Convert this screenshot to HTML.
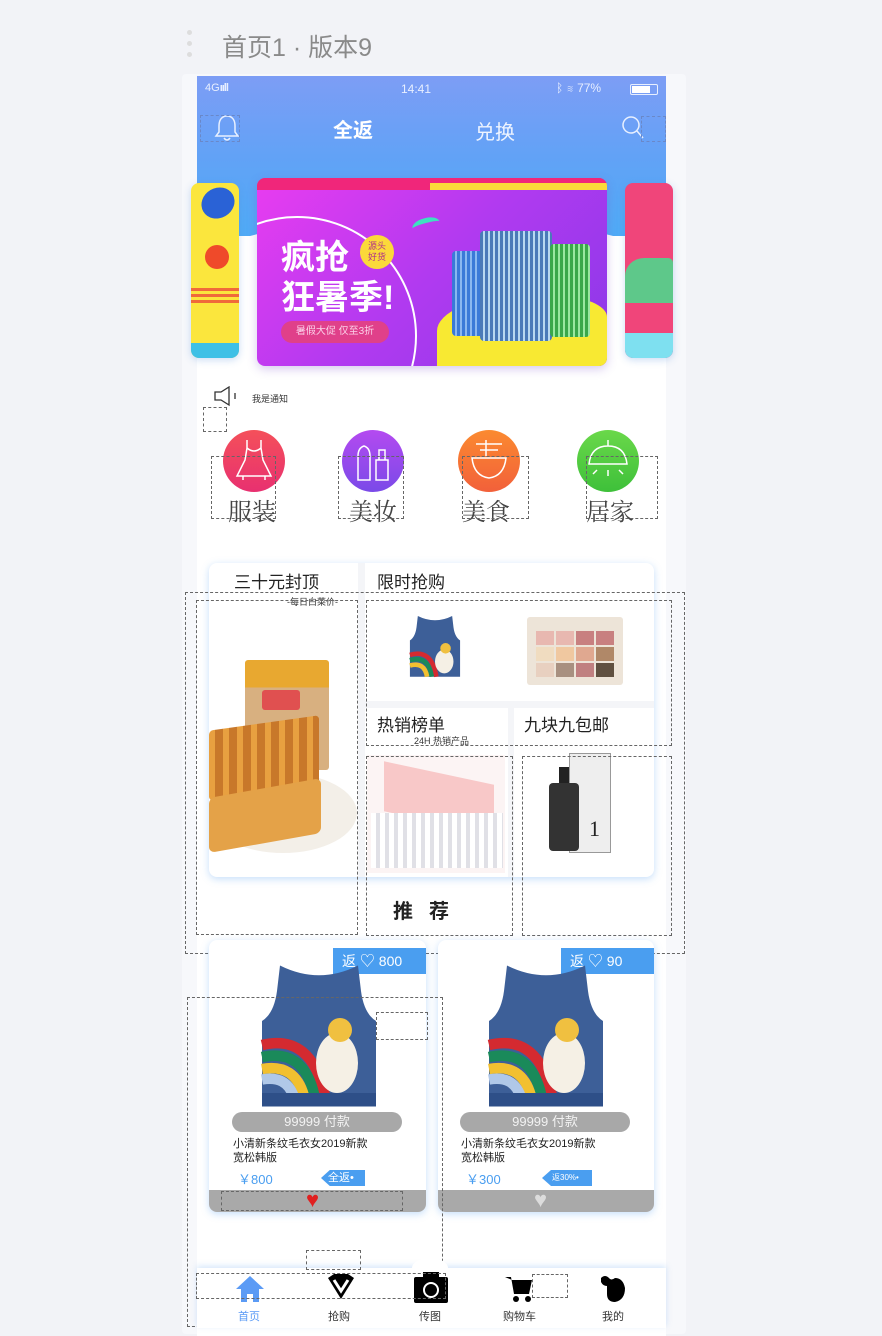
<!DOCTYPE html>
<html><head><meta charset="utf-8">
<style>
*{margin:0;padding:0;box-sizing:border-box}
body{width:882px;height:1322px;background:#f2f3f7;position:relative;overflow:hidden;font-family:"Liberation Sans","Noto Sans CJK SC",sans-serif}
.a{position:absolute}
.dash{position:absolute;border:1.2px dashed #666}
.t{white-space:nowrap}
</style></head><body>

<div class="a" style="left:187px;top:30px;width:5px;height:5px;border-radius:50%;background:#ddd"></div>
<div class="a" style="left:187px;top:41px;width:5px;height:5px;border-radius:50%;background:#ddd"></div>
<div class="a" style="left:187px;top:52px;width:5px;height:5px;border-radius:50%;background:#ddd"></div>
<div class="a t" style="left:222px;top:28px;font-size:25px;color:#8a8a8a">首页1 · 版本9</div>

<div class="a" style="left:182px;top:74px;width:504px;height:1260px;background:#f7f8fb;border-radius:4px"></div>
<div class="a" style="left:197px;top:76px;width:469px;height:1260px;background:#fff;overflow:hidden">
 <div class="a" style="left:0;top:0;width:469px;height:160px;background:linear-gradient(180deg,#7d9df5 0%,#62a2f6 50%,#4fabf6 100%)"></div>
 <div class="a" style="left:-40px;top:140px;width:549px;height:80px;background:#fff;border-radius:50%/100% 100% 0 0"></div>
</div>

<div class="a t" style="left:205px;top:82px;font-size:11px;color:#e8efff">4G<b style="letter-spacing:-1px">ııll</b></div>
<div class="a t" style="left:401px;top:82px;font-size:12px;color:#e8efff">14:41</div>
<div class="a t" style="left:556px;top:81px;font-size:12px;color:#e8efff">ᛒ ≋ 77%</div>
<div class="a" style="left:630px;top:84px;width:28px;height:11px;border:1px solid #e8efff;border-radius:2px"><div style="width:18px;height:7px;margin:1px;background:#fff"></div></div>

<svg class="a" style="left:212px;top:112px" width="30" height="32" viewBox="0 0 30 32"><path d="M15 4 C9 4 7 9 7 14 L7 20 L4 24 L26 24 L23 20 L23 14 C23 9 21 4 15 4Z M12 26 Q15 30 18 26" fill="none" stroke="#e8f0ff" stroke-width="1.5"/></svg>
<div class="dash" style="left:200px;top:115px;width:40px;height:27px;border-color:#6a88c8"></div>
<div class="a t" style="left:333px;top:114px;font-size:20px;font-weight:bold;color:#fff">全返</div>
<div class="a t" style="left:475px;top:116px;font-size:20px;color:#eef4ff">兑换</div>
<svg class="a" style="left:620px;top:114px" width="26" height="28"><circle cx="11" cy="11" r="8" fill="none" stroke="#e8f0ff" stroke-width="1.5"/><path d="M17 17 L23 24" stroke="#e8f0ff" stroke-width="1.5"/></svg>
<div class="dash" style="left:641px;top:116px;width:25px;height:26px;border-color:#6a88c8"></div>

<div class="a" style="left:191px;top:183px;width:48px;height:175px;border-radius:8px;background:#fbe63d;overflow:hidden;box-shadow:0 2px 8px rgba(80,140,220,.3)">
 <div class="a" style="left:10px;top:5px;width:34px;height:30px;border-radius:50%;background:#2a62d6;transform:rotate(-30deg)"></div>
 <div class="a" style="left:14px;top:62px;width:24px;height:24px;border-radius:50%;background:#ef4a2a"></div>
 <div class="a" style="left:0;top:105px;width:48px;height:3px;background:#f06a3a;box-shadow:0 6px 0 #f06a3a,0 12px 0 #f06a3a"></div>
 <div class="a" style="left:0;top:160px;width:48px;height:15px;background:#3ec0e6"></div>
</div>
<div class="a" style="left:625px;top:183px;width:48px;height:175px;border-radius:8px;background:#f0457a;overflow:hidden;box-shadow:0 2px 8px rgba(80,140,220,.3)">
 <div class="a" style="left:0;top:75px;width:48px;height:45px;background:#5ec88a;border-radius:40% 10% 0 0"></div>
 <div class="a" style="left:0;top:150px;width:48px;height:25px;background:#7ee0f0"></div>
</div>
<div class="a" style="left:257px;top:178px;width:350px;height:188px;border-radius:8px;overflow:hidden;background:linear-gradient(135deg,#e93cf0 0%,#b13af0 50%,#8a38e8 100%);box-shadow:0 3px 10px rgba(120,80,200,.3)">
 <div class="a" style="left:0;top:0;width:350px;height:12px;background:#f0267a"></div>
 <div class="a" style="left:173px;top:5px;width:177px;height:7px;background:#fbd93a"></div>
 <div class="a" style="left:-80px;top:38px;width:240px;height:240px;border:2px solid #fff;border-radius:50%"></div>
 <div class="a t" style="left:24px;top:60px;font-size:34px;font-weight:bold;color:#fff;line-height:40px">疯抢<br>狂暑季!</div>
 <div class="a" style="left:103px;top:57px;width:34px;height:34px;border-radius:50%;background:#fbd93a;font-size:9px;line-height:11px;text-align:center;padding-top:6px;color:#b0308a">源头<br>好货</div>
 <div class="a t" style="left:24px;top:143px;width:108px;height:22px;border-radius:11px;background:#e0408a;font-size:10px;color:#fbd0e8;text-align:center;line-height:22px">暑假大促 仅至3折</div>
 <div class="a" style="left:180px;top:118px;width:170px;height:70px;background:#f8e932;border-radius:50% 30% 0 0"></div>
 <div class="a" style="left:195px;top:73px;width:38px;height:85px;border-radius:4px;background:repeating-linear-gradient(90deg,#3a7ad8 0 3px,#8ab8f0 3px 5px)"></div>
 <div class="a" style="left:223px;top:53px;width:72px;height:110px;border-radius:4px;background:repeating-linear-gradient(90deg,#4a7ab8 0 3px,#b8d8f0 3px 5px)"></div>
 <div class="a" style="left:293px;top:66px;width:40px;height:93px;border-radius:4px;background:repeating-linear-gradient(90deg,#3aa84a 0 3px,#9ae8a0 3px 5px)"></div>
 <div class="a" style="left:155px;top:40px;width:28px;height:14px;border-radius:50%;border-top:5px solid #3ee0c0;transform:rotate(-15deg)"></div>
</div>

<svg class="a" style="left:213px;top:386px" width="28" height="22"><path d="M2 6 H8 L16 1 V19 L8 14 H2 Z" fill="none" stroke="#333" stroke-width="1.3"/><path d="M22 7 V13" stroke="#333" stroke-width="1.3"/></svg>
<div class="a t" style="left:252px;top:392px;font-size:9px;color:#333">我是通知</div>
<div class="dash" style="left:203px;top:407px;width:24px;height:25px"></div>

<div class="a" style="left:223px;top:430px;width:62px;height:62px;border-radius:50%;background:linear-gradient(180deg,#f4505a,#e83070)"></div>
<div class="a" style="left:342px;top:430px;width:62px;height:62px;border-radius:50%;background:linear-gradient(180deg,#b44af0,#7a4ae8)"></div>
<div class="a" style="left:458px;top:430px;width:62px;height:62px;border-radius:50%;background:linear-gradient(180deg,#fb8a30,#f2603a)"></div>
<div class="a" style="left:577px;top:430px;width:62px;height:62px;border-radius:50%;background:linear-gradient(180deg,#6ad84a,#3ec03a)"></div>
<svg class="a" style="left:223px;top:430px" width="62" height="62"><path d="M24 10 V18 M38 10 V18 M24 18 Q31 24 38 18 L40 30 L48 46 H14 L22 30 Z M20 46 V50 M42 46 V50" fill="none" stroke="#fff" stroke-width="1.5"/></svg>
<svg class="a" style="left:342px;top:430px" width="62" height="62"><path d="M16 50 V26 Q16 18 22 16 Q28 18 28 26 V50 Z M34 50 V30 H46 V50 Z M37 30 V20 H43 V30" fill="none" stroke="#fff" stroke-width="1.5"/></svg>
<svg class="a" style="left:458px;top:430px" width="62" height="62"><path d="M18 14 H44 M22 20 H40 M28 10 V26 M14 28 H48 Q46 46 31 48 Q16 46 14 28 Z" fill="none" stroke="#fff" stroke-width="1.5"/></svg>
<svg class="a" style="left:577px;top:430px" width="62" height="62"><path d="M31 10 V16 M12 34 Q14 16 31 16 Q48 16 50 34 Z M31 40 V46 M20 40 L16 44 M42 40 L46 44" fill="none" stroke="#fff" stroke-width="1.5"/></svg>
<div class="a t" style="left:228px;top:492px;font-size:24px;color:#444;font-family:'Noto Serif CJK SC',serif">服装</div>
<div class="a t" style="left:349px;top:492px;font-size:24px;color:#444;font-family:'Noto Serif CJK SC',serif">美妆</div>
<div class="a t" style="left:462px;top:492px;font-size:24px;color:#444;font-family:'Noto Serif CJK SC',serif">美食</div>
<div class="a t" style="left:586px;top:492px;font-size:24px;color:#444;font-family:'Noto Serif CJK SC',serif">居家</div>
<div class="dash" style="left:211px;top:456px;width:65px;height:63px"></div>
<div class="dash" style="left:338px;top:456px;width:66px;height:63px"></div>
<div class="dash" style="left:462px;top:456px;width:67px;height:63px"></div>
<div class="dash" style="left:586px;top:456px;width:72px;height:63px"></div>

<div class="a" style="left:209px;top:563px;width:445px;height:314px;border-radius:8px;background:#fff;box-shadow:0 2px 8px rgba(90,160,240,.35);overflow:hidden">
 <div class="a" style="left:149px;top:0;width:7px;height:314px;background:#f4f5f8"></div>
 <div class="a" style="left:156px;top:138px;width:289px;height:7px;background:#f4f5f8"></div>
 <div class="a" style="left:299px;top:145px;width:6px;height:169px;background:#f4f5f8"></div>
 <div class="a t" style="left:25px;top:5px;font-size:17px;color:#222">三十元封顶</div>
 <div class="a t" style="left:78px;top:32px;font-size:9px;color:#333">-每日白菜价-</div>
 <div class="a t" style="left:168px;top:5px;font-size:17px;color:#222">限时抢购</div>
 <div class="a t" style="left:168px;top:148px;font-size:17px;color:#222">热销榜单</div>
 <div class="a t" style="left:205px;top:171px;font-size:9px;color:#333">24H 热销产品</div>
 <div class="a t" style="left:315px;top:148px;font-size:17px;color:#222">九块九包邮</div>
 <div class="a" style="left:36px;top:97px;width:84px;height:110px;background:linear-gradient(180deg,#e8a830 0 25%,#d8b080 25%);border-radius:3px"></div>
 <div class="a" style="left:53px;top:127px;width:38px;height:20px;background:#e05050;border-radius:3px"></div>
 <div class="a" style="left:0;top:210px;width:148px;height:80px;background:#f3efe8;border-radius:50%"></div>
 <div class="a" style="left:0;top:160px;width:110px;height:70px;transform:skewY(-8deg);border-radius:4px;background:repeating-linear-gradient(90deg,#e8a040 0 6px,#c8782a 6px 14px)"></div>
 <div class="a" style="left:0;top:225px;width:112px;height:55px;background:#e4a248;transform:skewY(-10deg);border-radius:6px"></div>
 <svg class="a" style="left:193px;top:44px" width="66" height="80" viewBox="0 0 100 100"><path d="M24 3 Q50 16 76 3 L78 20 Q80 35 88 40 L88 95 L12 95 L12 40 Q20 35 22 20 Z" fill="#3d5f98"/><g fill="none" stroke-width="7"><path d="M12 62 Q45 52 52 95" stroke="#d42a30"/><path d="M12 70 Q40 62 45 95" stroke="#1a8a5a"/><path d="M12 78 Q34 72 38 95" stroke="#f2c030"/></g><ellipse cx="64" cy="72" rx="14" ry="18" fill="#f5f0e5"/><circle cx="66" cy="52" r="8" fill="#f0c040"/></svg>
 <div class="a" style="left:318px;top:54px;width:96px;height:68px;background:#ede4d8;border-radius:3px"></div>
 <div class="a" style="left:327px;top:68px;width:78px;height:46px;display:grid;grid-template-columns:repeat(4,1fr);gap:2px">
  <i style="background:#e8b8b0"></i><i style="background:#e8b8b0"></i><i style="background:#c88080"></i><i style="background:#c88080"></i>
  <i style="background:#f0dcc0"></i><i style="background:#f0c8a0"></i><i style="background:#e0a890"></i><i style="background:#b08868"></i>
  <i style="background:#e8d0c0"></i><i style="background:#a89080"></i><i style="background:#c08080"></i><i style="background:#605040"></i>
 </div>
 <div class="a" style="left:158px;top:192px;width:138px;height:118px;background:#fcf4f4"></div>
 <div class="a" style="left:175px;top:210px;width:110px;height:50px;background:#f8c8c8;transform:skewY(12deg)"></div>
 <div class="a" style="left:162px;top:250px;width:132px;height:55px;background:repeating-linear-gradient(90deg,#fff 0 5px,#e0e0e6 5px 9px)"></div>
 <div class="a" style="left:360px;top:190px;width:42px;height:100px;background:#eee;border:1px solid #999"></div>
 <div class="a" style="left:340px;top:220px;width:30px;height:68px;background:#333;border-radius:4px"></div>
 <div class="a" style="left:350px;top:204px;width:10px;height:16px;background:#222"></div>
 <div class="a t" style="left:380px;top:253px;font-size:22px;font-family:'Liberation Serif',serif;color:#222">1</div>
</div>
<div class="dash" style="left:185px;top:592px;width:500px;height:362px"></div>
<div class="dash" style="left:196px;top:600px;width:162px;height:335px"></div>
<div class="dash" style="left:366px;top:600px;width:306px;height:146px"></div>
<div class="dash" style="left:366px;top:756px;width:147px;height:180px"></div>
<div class="dash" style="left:522px;top:756px;width:150px;height:180px"></div>

<div class="a t" style="left:393px;top:895px;font-size:20px;font-weight:bold;color:#222;letter-spacing:16px">推荐</div>

<div class="a" style="left:209px;top:940px;width:217px;height:272px;border-radius:8px;background:#fff;box-shadow:0 2px 8px rgba(90,160,240,.35);overflow:hidden">
 <div class="a t" style="left:124px;top:8px;width:93px;height:26px;background:#4a9ef0;color:#fff;font-size:14px;line-height:26px;padding-left:9px">返 <span style="font-size:15px">♡</span> 800</div>
 <svg class="a" style="left:35px;top:20px" width="150" height="152" viewBox="0 0 100 100"><path d="M24 3 Q50 16 76 3 L78 20 Q80 35 88 40 L88 97 L12 97 L12 40 Q20 35 22 20 Z" fill="#3d5f98"/><g fill="none" stroke-width="7"><path d="M12 56 Q45 48 54 90" stroke="#d42a30"/><path d="M12 64 Q40 58 47 90" stroke="#1a8a5a"/><path d="M12 72 Q34 68 40 90" stroke="#f2c030"/><path d="M12 79 Q28 76 33 90" stroke="#b0c8e8"/></g><ellipse cx="62" cy="68" rx="14" ry="20" fill="#f5f0e5"/><circle cx="64" cy="46" r="8" fill="#f0c040"/><rect x="12" y="88" width="76" height="9" fill="#2e4f88"/></svg>
 <div class="a t" style="left:23px;top:172px;width:170px;height:20px;border-radius:10px;background:#a8a8a8;color:#f2f2f2;font-size:13px;text-align:center;line-height:20px">99999 付款</div>
 <div class="a" style="left:24px;top:197px;width:180px;font-size:11px;line-height:14px;color:#222">小清新条纹毛衣女2019新款<br>宽松韩版</div>
 <div class="a t" style="left:29px;top:229px;font-size:13px;color:#4a9ef0">￥800</div>
 <div class="a t" style="left:112px;top:230px;width:44px;height:16px;background:#4a9ef0;color:#fff;font-size:11px;line-height:16px;padding-left:4px;clip-path:polygon(20% 0,100% 0,100% 100%,20% 100%,0 50%)">&nbsp;全返•</div>
 <div class="a" style="left:0;top:250px;width:217px;height:22px;background:#a9a9a9"></div>
 <div class="a" style="left:97px;top:249px;font-size:22px;color:#e02020;line-height:22px">♥</div>
</div>
<div class="a" style="left:438px;top:940px;width:216px;height:272px;border-radius:8px;background:#fff;box-shadow:0 2px 8px rgba(90,160,240,.35);overflow:hidden">
 <div class="a t" style="left:123px;top:8px;width:93px;height:26px;background:#4a9ef0;color:#fff;font-size:14px;line-height:26px;padding-left:9px">返 <span style="font-size:15px">♡</span> 90</div>
 <svg class="a" style="left:33px;top:20px" width="150" height="152" viewBox="0 0 100 100"><path d="M24 3 Q50 16 76 3 L78 20 Q80 35 88 40 L88 97 L12 97 L12 40 Q20 35 22 20 Z" fill="#3d5f98"/><g fill="none" stroke-width="7"><path d="M12 56 Q45 48 54 90" stroke="#d42a30"/><path d="M12 64 Q40 58 47 90" stroke="#1a8a5a"/><path d="M12 72 Q34 68 40 90" stroke="#f2c030"/><path d="M12 79 Q28 76 33 90" stroke="#b0c8e8"/></g><ellipse cx="62" cy="68" rx="14" ry="20" fill="#f5f0e5"/><circle cx="64" cy="46" r="8" fill="#f0c040"/><rect x="12" y="88" width="76" height="9" fill="#2e4f88"/></svg>
 <div class="a t" style="left:22px;top:172px;width:170px;height:20px;border-radius:10px;background:#a8a8a8;color:#f2f2f2;font-size:13px;text-align:center;line-height:20px">99999 付款</div>
 <div class="a" style="left:23px;top:197px;width:180px;font-size:11px;line-height:14px;color:#222">小清新条纹毛衣女2019新款<br>宽松韩版</div>
 <div class="a t" style="left:28px;top:229px;font-size:13px;color:#4a9ef0">￥300</div>
 <div class="a t" style="left:104px;top:230px;width:50px;height:16px;background:#4a9ef0;color:#fff;font-size:8px;line-height:16px;padding-left:10px;clip-path:polygon(18% 0,100% 0,100% 100%,18% 100%,0 50%)">返30%•</div>
 <div class="a" style="left:0;top:250px;width:216px;height:22px;background:#a9a9a9"></div>
 <div class="a" style="left:96px;top:249px;font-size:22px;color:#dcdcdc;line-height:22px">♥</div>
</div>
<div class="dash" style="left:187px;top:997px;width:256px;height:330px"></div>
<div class="dash" style="left:376px;top:1012px;width:52px;height:28px"></div>
<div class="dash" style="left:221px;top:1191px;width:182px;height:20px"></div>

<div class="a" style="left:197px;top:1268px;width:469px;height:60px;background:#fff;box-shadow:0 -2px 6px rgba(90,160,240,.25)"></div>
<div class="a" style="left:412px;top:1258px;width:36px;height:20px;border-radius:50%;background:#fff"></div>
<svg class="a" style="left:234px;top:1274px" width="32" height="30"><path d="M16 2 L30 15 H25 V28 H19 V20 H13 V28 H7 V15 H2 Z" fill="#5b9bf5"/></svg>
<svg class="a" style="left:324px;top:1272px" width="34" height="30"><path d="M4 6 L10 2 H24 L30 6 L17 27 Z" fill="#000"/><path d="M10 8 L17 19 L24 8" fill="none" stroke="#fff" stroke-width="3"/></svg>
<svg class="a" style="left:413px;top:1270px" width="36" height="34"><rect x="1" y="7" width="34" height="26" rx="2" fill="#000"/><rect x="10" y="2" width="16" height="6" fill="#000"/><circle cx="18" cy="20" r="7" fill="none" stroke="#fff" stroke-width="2"/></svg>
<svg class="a" style="left:503px;top:1274px" width="32" height="30"><path d="M2 3 H8 L11 20 H26 L29 6 H9 Z" fill="#000"/><circle cx="13" cy="25" r="3" fill="#000"/><circle cx="25" cy="25" r="3" fill="#000"/></svg>
<svg class="a" style="left:597px;top:1272px" width="32" height="32"><path d="M4 6 Q8 2 12 6 Q14 9 18 6 Q26 6 28 16 Q28 28 18 30 Q10 30 10 22 L10 14 Q6 14 4 10 Z" fill="#000"/></svg>
<div class="a t" style="left:238px;top:1308px;font-size:11px;color:#5b9bf5">首页</div>
<div class="a t" style="left:328px;top:1308px;font-size:11px;color:#333">抢购</div>
<div class="a t" style="left:419px;top:1308px;font-size:11px;color:#333">传图</div>
<div class="a t" style="left:503px;top:1308px;font-size:11px;color:#333">购物车</div>
<div class="a t" style="left:602px;top:1308px;font-size:11px;color:#333">我的</div>
<div class="dash" style="left:196px;top:1273px;width:250px;height:26px"></div>
<div class="dash" style="left:306px;top:1250px;width:55px;height:20px"></div>
<div class="dash" style="left:532px;top:1274px;width:36px;height:24px"></div>
</body></html>
